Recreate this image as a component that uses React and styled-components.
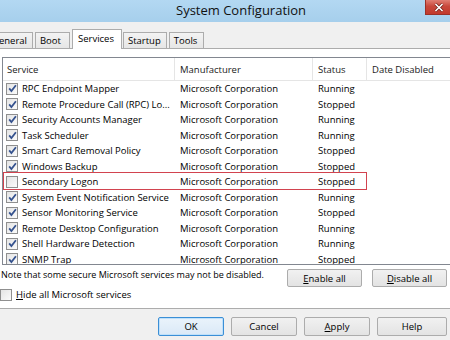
import React from 'react'
import styled, { createGlobalStyle, css } from 'styled-components'

const GlobalStyle = createGlobalStyle`
  html, body {
    margin: 0;
    padding: 0;
    overflow: hidden;
    background: #f0f0f0;
  }
  body {
    font-family: 'Open Sans', 'Noto Sans', sans-serif;
    font-size: 9.5px;
    color: #000;
  }
`

const Window = styled.div`
  width: 450px;
  height: 340px;
  display: flex;
  flex-direction: column;
  background: #f0f0f0;
`

const TitleBar = styled.div`
  height: 22px;
  flex: none;
  display: flex;
  align-items: flex-start;
  padding-left: 176px;
  background: linear-gradient(#b3d8f2, #a6cfec);
`

const Title = styled.div`
  font-size: 13px;
  line-height: 20px;
  color: #111;
`

const CloseButton = styled.div`
  margin-left: auto;
  margin-right: -3px;
  width: 28px;
  height: 15px;
  box-sizing: border-box;
  border: 1px solid #9b3128;
  border-top: none;
  background: linear-gradient(#e07f74, #c8483b 45%, #c23a2d);
  display: flex;
  align-items: center;
  justify-content: center;
`

const TabStrip = styled.div`
  display: flex;
  align-items: flex-end;
  gap: 2px;
  height: 20px;
  margin-top: 7px;
  margin-left: -13px;
  position: relative;
  z-index: 2;
`

const Tab = styled.div`
  min-width: 35px;
  box-sizing: border-box;
  height: 16px;
  margin-bottom: 1px;
  padding: 0 5px 0 4px;
  line-height: 15px;
  border: 1px solid #acacac;
  border-bottom: none;
  background: linear-gradient(#f3f3f3, #e6e6e6);
  white-space: nowrap;

  ${p => p.$active && css`
    height: 20px;
    margin-bottom: 0;
    margin-right: -1px;
    padding: 0 7px 0 5px;
    line-height: 17px;
    background: #fff;
  `}
`

const Panel = styled.div`
  margin-top: -1px;
  margin-left: -4px;
  width: 460px;
  height: 261px;
  flex: none;
  box-sizing: border-box;
  border: 1px solid #acacac;
  background: #fff;
  padding: 8px 4px 0 4px;
  display: flex;
  flex-direction: column;
`

const List = styled.div`
  margin-left: 1px;
  width: 452px;
  height: 208px;
  box-sizing: border-box;
  border: 1px solid #828790;
  overflow: hidden;
  background: #fff;
`

const cols = css`
  display: grid;
  grid-template-columns: 172px 138px 54px 1fr;
`

const Header = styled.div`
  ${cols}
  height: 22px;
  border-bottom: 1px solid #e5e5e5;
`

const HeadCell = styled.div`
  padding-left: ${p => p.$pad ?? 5}px;
  line-height: 23px;
  color: #1a1a1a;
  border-right: 1px solid #e5e5e5;
  white-space: nowrap;
`

const Row = styled.div`
  ${cols}
  height: 15.5px;
  line-height: 15.5px;
  position: relative;

  ${p => p.$marked && css`
    &::after {
      content: '';
      position: absolute;
      left: 0;
      top: -2px;
      width: 364px;
      height: 18px;
      box-sizing: border-box;
      border: 1px solid #d2434f;
      pointer-events: none;
    }
  `}
`

const NameCell = styled.div`
  display: flex;
  align-items: center;
  gap: 4px;
  padding-left: 3px;
  white-space: nowrap;
  overflow: hidden;
`

const Cell = styled.div`
  padding-left: 5px;
  white-space: nowrap;
`

const Box = styled.span`
  width: 12px;
  height: 12px;
  flex: none;
  box-sizing: border-box;
  border: 1px solid #8f8f8f;
  background: linear-gradient(135deg, #e4e4e4, #fbfbfb);
  display: inline-flex;
  align-items: center;
  justify-content: center;
`

const NoteRow = styled.div`
  display: flex;
  align-items: flex-start;
  margin-top: 4px;
  height: 18px;
`

const Note = styled.div`
  flex: 1;
  font-size: 9px;
  line-height: 11px;
  white-space: nowrap;
`

const HideRow = styled.label`
  display: flex;
  align-items: center;
  gap: 4px;
  margin-top: 1px;
  margin-left: -1px;
  height: 13px;
`

const ButtonGroup = styled.div`
  display: flex;
  gap: ${p => p.$gap}px;
  margin-right: ${p => p.$right ?? 4}px;
`

const Button = styled.div`
  width: ${p => p.$w}px;
  height: ${p => p.$h}px;
  box-sizing: border-box;
  border: 1px solid #acacac;
  border-radius: 2px;
  background: linear-gradient(#f1f1f1, #e3e3e3);
  display: flex;
  align-items: center;
  justify-content: center;

  ${p => p.$default && css`
    border-color: #3b8fd6;
    background: linear-gradient(#eaf3fb, #dae9f7);
    box-shadow: inset 0 0 0 1px #bfe0fa;
  `}
`

const Footer = styled.div`
  display: flex;
  justify-content: flex-end;
  margin-top: 8px;
`

const Key = styled.span`
  text-decoration: underline;
`

function Check({ on }) {
  return (
    <Box>
      {on && (
        <svg width="9" height="9" viewBox="0 0 9 9">
          <path d="M1.2 4.4 L3.4 7 L7.9 1.3" fill="none" stroke="#35528e" strokeWidth="1.8" />
        </svg>
      )}
    </Box>
  )
}

const services = [
  ['RPC Endpoint Mapper', 'Running', true],
  ['Remote Procedure Call (RPC) Lo...', 'Stopped', true],
  ['Security Accounts Manager', 'Running', true],
  ['Task Scheduler', 'Running', true],
  ['Smart Card Removal Policy', 'Stopped', true],
  ['Windows Backup', 'Stopped', true],
  ['Secondary Logon', 'Stopped', false],
  ['System Event Notification Service', 'Running', true],
  ['Sensor Monitoring Service', 'Stopped', true],
  ['Remote Desktop Configuration', 'Running', true],
  ['Shell Hardware Detection', 'Running', true],
  ['SNMP Trap', 'Stopped', true],
]

const tabs = ['General', 'Boot', 'Services', 'Startup', 'Tools']

export default function App() {
  return (
    <>
      <GlobalStyle />
      <Window>
        <TitleBar>
          <Title>System Configuration</Title>
          <CloseButton>
            <svg width="10" height="9" viewBox="0 0 10 9">
              <path d="M1.5 1 L8.5 8 M8.5 1 L1.5 8" stroke="#6e2119" strokeWidth="3" />
              <path d="M1.5 1 L8.5 8 M8.5 1 L1.5 8" stroke="#fff" strokeWidth="1.6" />
            </svg>
          </CloseButton>
        </TitleBar>

        <TabStrip>
          {tabs.map(t => (
            <Tab key={t} $active={t === 'Services'}>{t}</Tab>
          ))}
        </TabStrip>

        <Panel>
          <List>
            <Header>
              <HeadCell $pad={4}>Service</HeadCell>
              <HeadCell>Manufacturer</HeadCell>
              <HeadCell>Status</HeadCell>
              <HeadCell>Date Disabled</HeadCell>
            </Header>
            {services.map(([name, status, on]) => (
              <Row key={name} $marked={!on}>
                <NameCell>
                  <Check on={on} />
                  {name}
                </NameCell>
                <Cell>Microsoft Corporation</Cell>
                <Cell>{status}</Cell>
                <Cell />
              </Row>
            ))}
          </List>

          <NoteRow>
            <Note>Note that some secure Microsoft services may not be disabled.</Note>
            <ButtonGroup $gap={10}>
              <Button $w={75} $h={18}><Key>E</Key>nable all</Button>
              <Button $w={75} $h={18}><Key>D</Key>isable all</Button>
            </ButtonGroup>
          </NoteRow>

          <HideRow>
            <Check on={false} />
            <span><Key>H</Key>ide all Microsoft services</span>
          </HideRow>
        </Panel>

        <Footer>
          <ButtonGroup $gap={7} $right={3}>
            <Button $w={66} $h={19} $default>OK</Button>
            <Button $w={66} $h={19}>Cancel</Button>
            <Button $w={66} $h={19}><Key>A</Key>pply</Button>
            <Button $w={70} $h={19}>Help</Button>
          </ButtonGroup>
        </Footer>
      </Window>
    </>
  )
}
